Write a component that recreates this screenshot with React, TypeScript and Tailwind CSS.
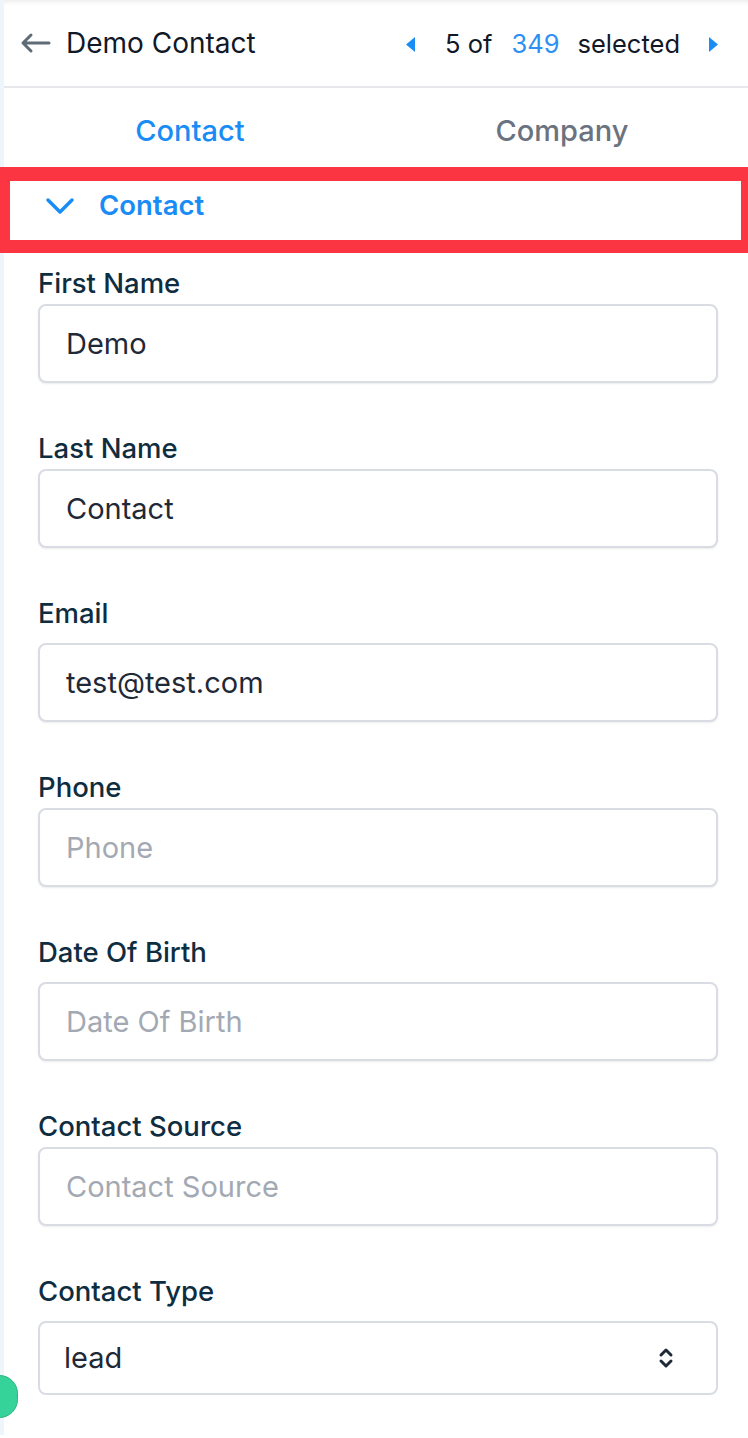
import { useState } from 'react';

const fields = [
  { label: 'First Name', value: 'Demo', mb: 'mb-[4px]' },
  { label: 'Last Name', value: 'Contact', mb: 'mb-[4px]' },
  { label: 'Email', value: 'test@test.com', mb: 'mb-[13px]' },
  { label: 'Phone', value: '', mb: 'mb-[4px]' },
  { label: 'Date Of Birth', value: '', mb: 'mb-[13px]' },
  { label: 'Contact Source', value: '', mb: 'mb-[4px]' },
];

const labelCls = 'block h-[34px] leading-[34px] text-[27.5px] font-medium text-[#0f2d40]';
const inputCls =
  'w-full h-[79px] px-[26px] rounded-[8px] border-2 border-[#d9dde3] bg-white text-[29px] text-[#1f2937] placeholder:text-[#a3a9b3] shadow-[0_1px_2px_rgba(0,0,0,0.08)] focus:outline-none';

export default function App() {
  const [tab, setTab] = useState<'contact' | 'company'>('contact');
  const [form, setForm] = useState(fields.map((f) => f.value));
  const [type, setType] = useState('lead');

  return (
    <div className="relative min-h-[1438px] bg-white overflow-hidden" style={{ fontFamily: 'Inter, "Noto Sans", sans-serif' }}>
      {/* Header */}
      <div className="border-l-4 border-l-[#eef5fb]">
        <div className="h-[88px] flex items-center justify-between pl-[16px] pr-[30px] border-b-2 border-b-[#e6e8ec] shadow-[inset_0_5px_4px_-3px_rgba(0,0,0,0.08)]">
          <div className="flex items-center gap-[14px]">
            <svg width="32" height="22" viewBox="0 0 32 22" fill="none" stroke="#5f6b75" strokeWidth="3" strokeLinecap="round" strokeLinejoin="round">
              <path d="M29 11H3M11 3L3 11l8 8" />
            </svg>
            <span className="text-[28px] text-[#111827]">Demo Contact</span>
          </div>
          <div className="flex items-center text-[25.5px] text-[#111827] pt-[2px]">
            <svg width="9" height="15" viewBox="0 0 9 15" fill="#1a8cf5"><path d="M9 0v15L0 7.5z" /></svg>
            <span className="ml-[30px]">5 of</span>
            <span className="ml-[19px] text-[#2d8ff3]">349</span>
            <span className="ml-[18px]">selected</span>
            <svg className="ml-[29px]" width="9" height="15" viewBox="0 0 9 15" fill="#1a8cf5"><path d="M0 0v15l9-7.5z" /></svg>
          </div>
        </div>

        {/* Tabs */}
        <div className="h-[79px] grid grid-cols-2 pt-[7px]">
          <button
            onClick={() => setTab('contact')}
            className={`text-[29px] font-medium ${tab === 'contact' ? 'text-[#1a8cf5]' : 'text-[#6b7280]'}`}
          >
            Contact
          </button>
          <button
            onClick={() => setTab('company')}
            className={`text-[29px] font-medium ${tab === 'company' ? 'text-[#1a8cf5]' : 'text-[#6b7280]'}`}
          >
            Company
          </button>
        </div>
      </div>

      {/* Section header (highlighted) */}
      <div className="h-[86px] border-[#fb3541] border-t-[14px] border-b-[13px] border-l-[10px] border-r-[7px] flex items-center pl-[35px] pb-[9px] gap-[24px]">
        <svg width="30" height="18" viewBox="0 0 30 18" fill="none" stroke="#1a8cf5" strokeWidth="3.5" strokeLinecap="round" strokeLinejoin="round">
          <path d="M3 3l12 12L27 3" />
        </svg>
        <span className="text-[27.5px] font-semibold text-[#1a8cf5]">Contact</span>
      </div>

      {/* Form */}
      <div className="border-l-4 border-l-[#eef5fb] pl-[34px] pr-[30px] pt-[13px] pb-[40px]">
        {fields.map((f, i) => (
          <div key={f.label} className={i === 0 ? '' : 'mt-[48px]'}>
            <label className={`${labelCls} ${f.mb}`}>{f.label}</label>
            <input
              className={inputCls}
              value={form[i]}
              placeholder={f.label}
              onChange={(e) => setForm((v) => v.map((x, j) => (j === i ? e.target.value : x)))}
            />
          </div>
        ))}
        <div className="mt-[48px]">
          <label className={`${labelCls} mb-[13px]`}>Contact Type</label>
          <div className="relative">
            <select
              value={type}
              onChange={(e) => setType(e.target.value)}
              className="w-full h-[74px] appearance-none px-[24px] rounded-[8px] border-2 border-[#d9dde3] bg-white text-[29px] text-[#1f2937] focus:outline-none"
            >
              <option value="lead">lead</option>
              <option value="customer">customer</option>
            </select>
            <svg className="absolute right-[44px] top-[26px] pointer-events-none" width="16" height="22" viewBox="0 0 16 22" fill="none" stroke="#1f2937" strokeWidth="3" strokeLinecap="round" strokeLinejoin="round">
              <path d="M3 8l5-5 5 5M3 14l5 5 5-5" />
            </svg>
          </div>
        </div>
      </div>

      {/* Floating green badge */}
      <div className="absolute left-[-19px] top-[1375px] w-[37px] h-[43px] rounded-full bg-[#35d399] border border-[#2bb67f]" />
    </div>
  );
}
